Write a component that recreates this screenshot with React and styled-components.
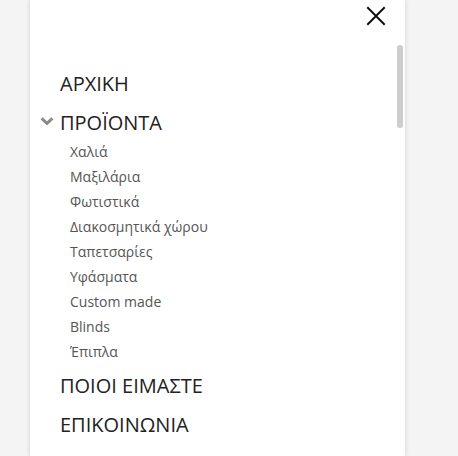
import React from "react";
import styled, { createGlobalStyle } from "styled-components";

const GlobalStyle = createGlobalStyle`
  html, body {
    margin: 0;
    padding: 0;
    background: #f4f4f4;
    font-family: "Open Sans", "Noto Sans", sans-serif;
    overflow: hidden;
  }
`;

const Page = styled.div`
  height: 456px;
  display: flex;
`;

const Panel = styled.aside`
  position: relative;
  margin-left: 30px;
  width: 375px;
  height: 100%;
  background: #fff;
  box-shadow: 0 0 5px rgba(0, 0, 0, 0.14);
`;

const Header = styled.div`
  height: 64px;
  box-sizing: border-box;
  display: flex;
  justify-content: flex-end;
  align-items: flex-start;
  padding: 6px 19px 0 0;
`;

const CloseButton = styled.button`
  width: 20px;
  height: 20px;
  padding: 0;
  border: 0;
  background: none;
  display: block;
  cursor: pointer;
  svg { display: block; }
`;

const ScrollThumb = styled.div`
  position: absolute;
  left: 367px;
  top: 45px;
  width: 6px;
  height: 83px;
  border-radius: 3px;
  background: #cdcdcd;
`;

const Menu = styled.ul`
  list-style: none;
  margin: 0;
  padding: 0;
`;

const MenuItem = styled.li`
  margin: 0;
  padding: 0;
`;

const MenuRow = styled.div`
  display: flex;
  align-items: center;
  padding-left: ${(p) => (p.$hasToggle ? "10px" : "30px")};
`;

const Toggle = styled.span`
  width: 14px;
  height: 8px;
  margin-right: 6px;
  margin-top: -4px;
  display: block;
  svg { display: block; }
`;

const MainLink = styled.a`
  font-size: 20px;
  line-height: 39px;
  color: #222;
  text-decoration: none;
`;

const SubMenu = styled.ul`
  list-style: none;
  margin: -3px 0 2px;
  padding: 0 0 0 40px;
`;

const SubLink = styled.a`
  display: block;
  font-size: 14px;
  line-height: 25px;
  color: #555;
  text-decoration: none;
`;

const subItems = [
  "Χαλιά",
  "Μαξιλάρια",
  "Φωτιστικά",
  "Διακοσμητικά χώρου",
  "Ταπετσαρίες",
  "Υφάσματα",
  "Custom made",
  "Blinds",
  "Έπιπλα",
];

const Chevron = () => (
  <svg width="14" height="8" viewBox="0 0 14 8">
    <polyline
      points="1.6,1.4 7,6.4 12.4,1.4"
      fill="none"
      stroke="#8a8a8a"
      strokeWidth="3"
    />
  </svg>
);

const CloseIcon = () => (
  <svg width="20" height="20" viewBox="0 0 20 20">
    <path d="M1.3 1.3 L18.7 18.7 M18.7 1.3 L1.3 18.7" stroke="#111" strokeWidth="2" fill="none" />
  </svg>
);

export default function App() {
  return (
    <>
      <GlobalStyle />
      <Page>
        <Panel>
          <Header>
            <CloseButton aria-label="close">
              <CloseIcon />
            </CloseButton>
          </Header>
          <ScrollThumb />
          <Menu>
            <MenuItem>
              <MenuRow>
                <MainLink href="#">ΑΡΧΙΚΗ</MainLink>
              </MenuRow>
            </MenuItem>
            <MenuItem>
              <MenuRow $hasToggle>
                <Toggle>
                  <Chevron />
                </Toggle>
                <MainLink href="#">ΠΡΟΪΟΝΤΑ</MainLink>
              </MenuRow>
              <SubMenu>
                {subItems.map((s) => (
                  <li key={s}>
                    <SubLink href="#">{s}</SubLink>
                  </li>
                ))}
              </SubMenu>
            </MenuItem>
            <MenuItem>
              <MenuRow>
                <MainLink href="#">ΠΟΙΟΙ ΕΙΜΑΣΤΕ</MainLink>
              </MenuRow>
            </MenuItem>
            <MenuItem>
              <MenuRow>
                <MainLink href="#">ΕΠΙΚΟΙΝΩΝΙΑ</MainLink>
              </MenuRow>
            </MenuItem>
          </Menu>
        </Panel>
      </Page>
    </>
  );
}
